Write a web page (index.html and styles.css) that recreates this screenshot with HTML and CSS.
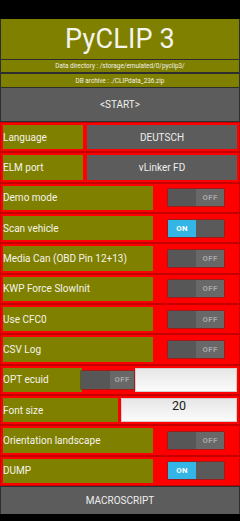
FILE: index.html
```html
<!DOCTYPE html>
<html>
<head>
<meta charset="utf-8">
<link rel="stylesheet" href="styles.css">
</head>
<body>
<div class="statusbar"></div>
<div class="app">
  <div class="title">PyCLIP 3</div>
  <div class="info info-dir">Data directory : /storage/emulated/0/pyclip3/</div>
  <div class="info info-db">DB archive : ./CLIPdata_236.zip</div>
  <div class="bigbtn start">&lt;START&gt;</div>
  <div class="rows">
    <div class="row">
      <div class="lbl lbl-s">Language</div>
      <div class="btn">DEUTSCH</div>
    </div>
    <div class="row">
      <div class="lbl lbl-s">ELM port</div>
      <div class="btn">vLinker FD</div>
    </div>
    <div class="row">
      <div class="lbl lbl-w">Demo mode</div>
      <div class="swcell"><div class="sw off"><span class="knob"></span><span class="txt">OFF</span></div></div>
    </div>
    <div class="row">
      <div class="lbl lbl-w">Scan vehicle</div>
      <div class="swcell"><div class="sw on"><span class="txt">ON</span><span class="knob"></span></div></div>
    </div>
    <div class="row">
      <div class="lbl lbl-w">Media Can (OBD Pin 12+13)</div>
      <div class="swcell"><div class="sw off"><span class="knob"></span><span class="txt">OFF</span></div></div>
    </div>
    <div class="row">
      <div class="lbl lbl-w">KWP Force SlowInit</div>
      <div class="swcell"><div class="sw off"><span class="knob"></span><span class="txt">OFF</span></div></div>
    </div>
    <div class="row">
      <div class="lbl lbl-w">Use CFC0</div>
      <div class="swcell"><div class="sw off"><span class="knob"></span><span class="txt">OFF</span></div></div>
    </div>
    <div class="row">
      <div class="lbl lbl-w">CSV Log</div>
      <div class="swcell"><div class="sw off"><span class="knob"></span><span class="txt">OFF</span></div></div>
    </div>
    <div class="row row-opt">
      <div class="lbl lbl-opt">OPT ecuid</div>
      <div class="sw sw-small off"><span class="knob"></span><span class="txt">OFF</span></div>
      <div class="input"></div>
    </div>
    <div class="row row-font">
      <div class="lbl lbl-font">Font size</div>
      <div class="input input-num">20</div>
    </div>
    <div class="row">
      <div class="lbl lbl-w">Orientation landscape</div>
      <div class="swcell"><div class="sw off"><span class="knob"></span><span class="txt">OFF</span></div></div>
    </div>
    <div class="row">
      <div class="lbl lbl-w">DUMP</div>
      <div class="swcell"><div class="sw on"><span class="txt">ON</span><span class="knob"></span></div></div>
    </div>
  </div>
  <div class="bigbtn macro">MACROSCRIPT</div>
</div>
<div class="navbar"></div>
</body>
</html>
```

FILE: styles.css
```css
html, body {
  margin: 0;
  padding: 0;
  background: #000;
}
body {
  width: 240px;
  height: 521px;
  overflow: hidden;
  font-family: Roboto, "Noto Sans", sans-serif;
  color: #f2f2f2;
}
.statusbar {
  height: 19px;
  background: #000;
}
.navbar {
  height: 7px;
  background: #000;
}
.app {
  background: #2e2e2e;
  display: flex;
  flex-direction: column;
  height: 495px;
  padding: 0 1px;
}
.title {
  height: 40px;
  background: #808000;
  display: flex;
  align-items: center;
  justify-content: center;
  font-size: 27px;
  color: #f4f4ee;
  letter-spacing: 0.2px;
}
.info {
  background: #808000;
  display: flex;
  align-items: center;
  justify-content: center;
  font-size: 6.4px;
  color: #f0f0e8;
}
.info-dir {
  height: 12px;
  margin-top: 1px;
}
.info-db {
  height: 13px;
  margin-top: 2px;
}
.bigbtn {
  background: #5c5c5c;
  display: flex;
  align-items: center;
  justify-content: center;
  font-size: 10px;
  color: #eeeeee;
}
.start {
  height: 33px;
  margin-top: 1px;
}
.macro {
  height: 27px;
  margin-top: 1px;
}
.rows {
  height: 364px;
  margin: 1px -1px 0;
  display: flex;
  flex-direction: column;
}
.row {
  flex: 1;
  background: #ff0000;
  border: 1px solid #c40000;
  padding: 2px;
  display: flex;
  align-items: stretch;
  min-height: 0;
}
.lbl {
  background: #808000;
  display: flex;
  align-items: center;
  font-size: 10px;
  color: #f4f4ec;
  white-space: nowrap;
  overflow: hidden;
}
.lbl-s {
  width: 80px;
}
.lbl-w {
  width: 150px;
}
.lbl-opt {
  width: 79px;
}
.lbl-font {
  width: 115px;
}
.btn {
  flex: 1;
  margin-left: 4px;
  background: #5c5c5c;
  display: flex;
  align-items: center;
  justify-content: center;
  font-size: 10px;
  color: #eeeeee;
}
.swcell {
  flex: 1;
  display: flex;
  align-items: center;
  justify-content: center;
  padding-left: 2px;
}
.sw {
  width: 56px;
  height: 17px;
  display: flex;
  box-shadow: 0 0 0 0.5px #3a3a3a;
}
.sw .knob {
  width: 28px;
  background: #575757;
}
.sw .txt {
  flex: 1;
  display: flex;
  align-items: center;
  justify-content: center;
  font-size: 7.8px;
  font-weight: bold;
  letter-spacing: 0.4px;
}
.sw.off .txt {
  background: #686868;
  color: #a8a8a8;
}
.sw.on .txt {
  background: #33b5e5;
  color: #ffffff;
}
.sw.on .knob {
  background: #5a5a5a;
}
.sw-small {
  width: 53px;
  height: 18px;
  align-self: center;
  margin-left: -1px;
}
.sw-small .knob {
  width: 29px;
}
.input {
  flex: 1;
  background: linear-gradient(#e6e6e6, #fbfbfb);
  border: 1px solid #cfcfcf;
}
.row-opt .input {
  margin-left: 1px;
}
.input-num {
  margin-left: 3px;
  display: flex;
  justify-content: center;
  font-size: 12.5px;
  color: #1a1a1a;
  padding-top: 1px;
  line-height: 12px;
}
```
